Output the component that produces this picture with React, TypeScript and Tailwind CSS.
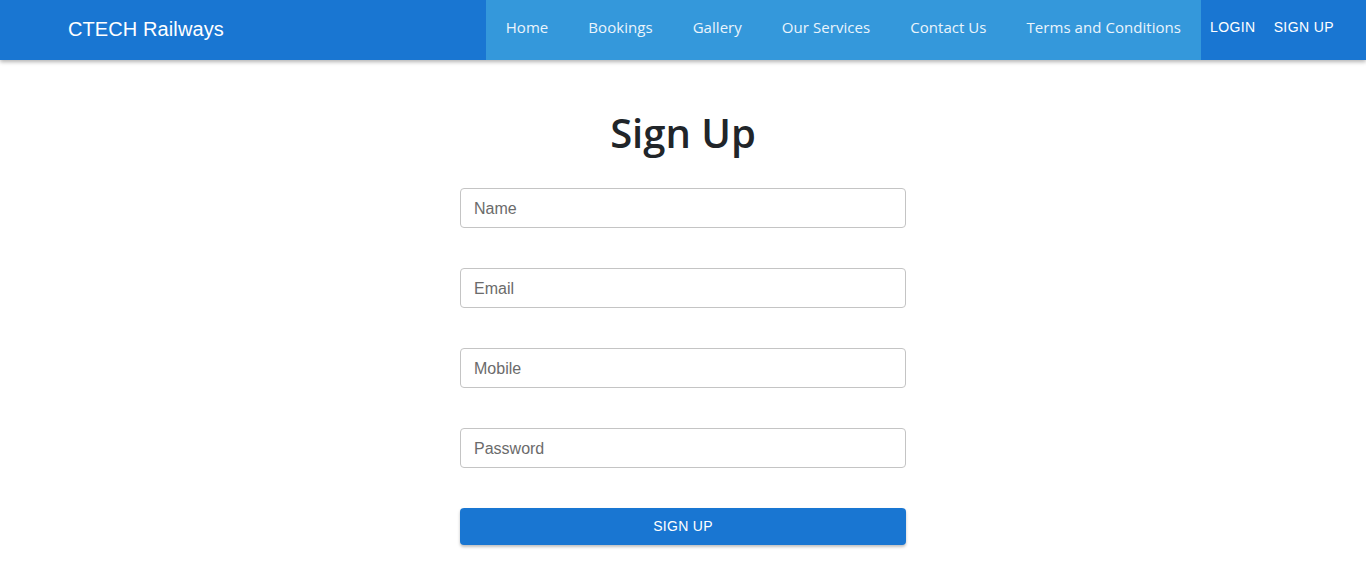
import { useState } from "react";

const links = ["Home", "Bookings", "Gallery", "Our Services", "Contact Us", "Terms and Conditions"];

function Navbar() {
  return (
    <header className="h-[60px] w-full bg-[#1976d2] flex items-stretch shadow-[0_2px_4px_rgba(0,0,0,0.3)] relative z-10">
      <div className="flex items-center pl-[68px] pb-[3px] flex-1">
        <span className="text-white text-[20px] tracking-[0.1px] font-medium font-['Liberation_Sans',Arial,sans-serif]">
          CTECH Railways
        </span>
      </div>
      <nav className="flex items-stretch bg-[#3498db]">
        {links.map((l) => (
          <a
            key={l}
            href="#"
            className="flex items-center px-5 pb-[5px] text-[15px] tracking-[0.05px] text-[#eaf4fc] font-['Open_Sans','Noto_Sans',sans-serif]"
          >
            {l}
          </a>
        ))}
      </nav>
      <div className="flex items-center gap-[18px] pl-[9px] pr-8 pb-[5px]">
        <a href="#" className="text-white text-[14px] tracking-[0.4px] font-medium font-['Liberation_Sans',Arial,sans-serif]">LOGIN</a>
        <a href="#" className="text-white text-[14px] tracking-[0.4px] font-medium font-['Liberation_Sans',Arial,sans-serif]">SIGN UP</a>
      </div>
    </header>
  );
}

function SignUp() {
  const [form, setForm] = useState({ name: "", email: "", mobile: "", password: "" });
  const fields: { key: keyof typeof form; label: string; type: string }[] = [
    { key: "name", label: "Name", type: "text" },
    { key: "email", label: "Email", type: "email" },
    { key: "mobile", label: "Mobile", type: "text" },
    { key: "password", label: "Password", type: "password" },
  ];

  return (
    <main className="flex flex-col items-center pt-[45px]">
      <h1 className="text-[40px] leading-[56px] font-semibold text-[#212529] font-['Open_Sans','Noto_Sans',sans-serif]">
        Sign Up
      </h1>
      <form className="w-[446px] mt-[27px] flex flex-col gap-10" onSubmit={(e) => e.preventDefault()}>
        {fields.map((f) => (
          <input
            key={f.key}
            type={f.type}
            placeholder={f.label}
            value={form[f.key]}
            onChange={(e) => setForm({ ...form, [f.key]: e.target.value })}
            className="h-10 w-full rounded-[4px] border border-[#c4c4c4] px-[13px] pt-[2px] text-[16px] text-[#333] placeholder:text-[#6b6b6b] font-['Liberation_Sans',Arial,sans-serif] outline-none"
          />
        ))}
        <button
          type="submit"
          className="h-[37px] w-full rounded-[4px] bg-[#1976d2] text-white text-[14px] tracking-[0.3px] font-['Liberation_Sans',Arial,sans-serif] shadow-[0_2px_3px_rgba(0,0,0,0.25)]"
        >
          SIGN UP
        </button>
      </form>
    </main>
  );
}

export default function App() {
  return (
    <div className="min-h-[580px] bg-white">
      <Navbar />
      <SignUp />
    </div>
  );
}
